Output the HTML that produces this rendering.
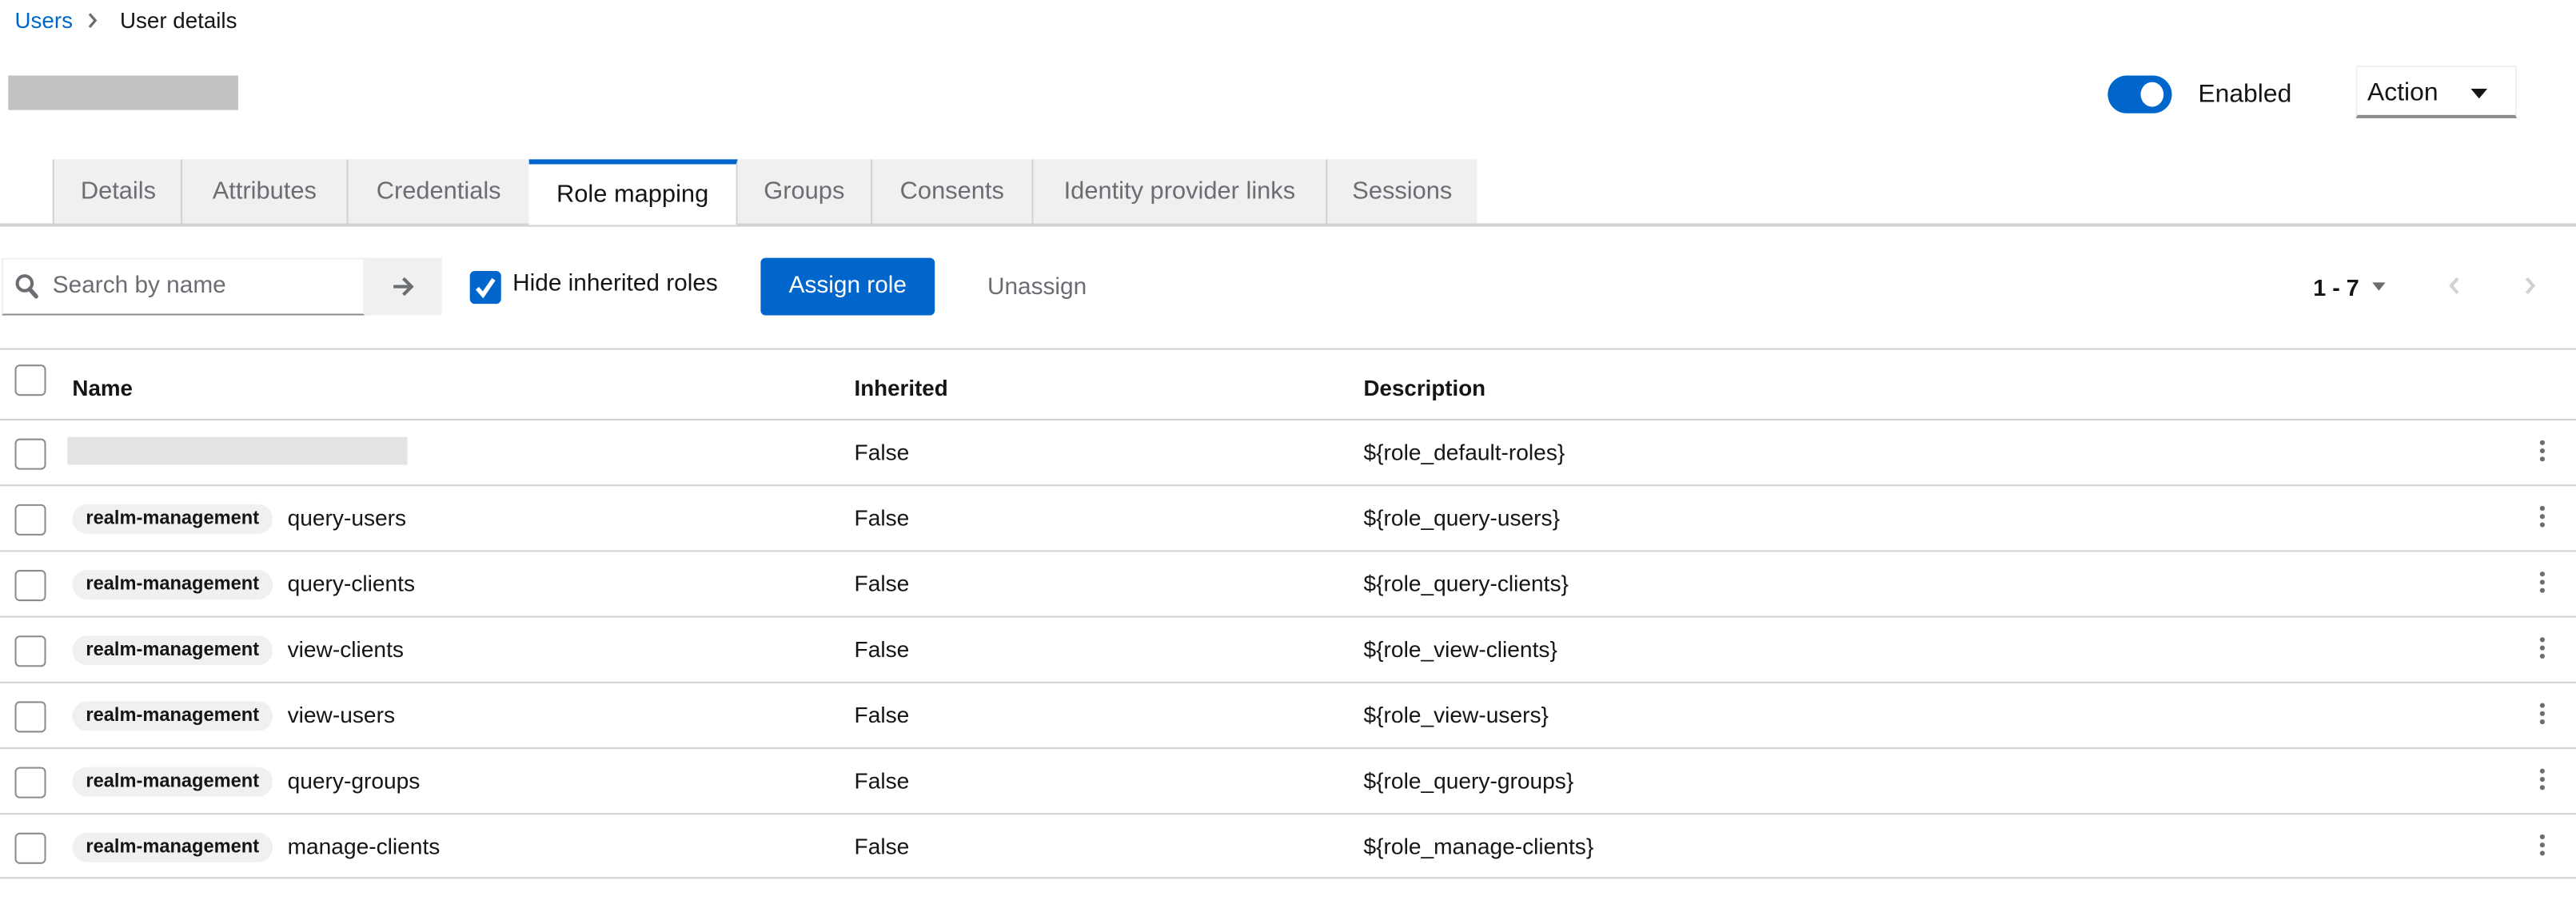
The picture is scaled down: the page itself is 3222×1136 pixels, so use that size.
<!DOCTYPE html>
<html><head><meta charset="utf-8"><style>
html,body{margin:0;padding:0;background:#fff;overflow:hidden;width:3222px;height:1136px}
#w{position:absolute;left:0;top:0;width:1568px;height:553px;transform:scale(2.05485);transform-origin:0 0;font-family:"Liberation Sans",sans-serif;color:#151515}
.a{position:absolute;white-space:nowrap}
.tab{position:absolute;top:97px;height:39px;background:#f0f0f0;border-left:1px solid #d2d2d2;box-sizing:border-box;font-size:15px;color:#6a6e73;line-height:40px;text-align:center}
.hl{position:absolute;left:0;width:1568px;height:1px;background:#d2d2d2}
.cb{position:absolute;left:9px;width:17px;height:17px;border:1.5px solid #8a8d90;border-radius:3px;background:#fff}
.chip{position:absolute;left:44px;height:18px;width:122px;border-radius:9px;background:#f0f0f0;font-size:11.5px;font-weight:bold;line-height:19px;text-align:center;color:#151515}
.t{position:absolute;font-size:13.7px;white-space:nowrap}
.keb{position:absolute;left:1546px;width:3px}
.keb i{display:block;width:3.4px;height:3.4px;border-radius:50%;background:#6a6e73;margin-bottom:1.6px}
</style></head><body><div id="w">
<div class="a" style="left:9px;top:5px;font-size:13.5px;color:#06c">Users</div>
<svg class="a" style="left:53px;top:7px" width="7" height="11" viewBox="0 0 7 11"><path d="M1.5 1.5 L5 5.5 L1.5 9.5" fill="none" stroke="#6a6e73" stroke-width="1.6"/></svg>
<div class="a" style="left:73px;top:5px;font-size:13.5px">User details</div>
<div class="a" style="left:5px;top:46px;width:140px;height:21px;background:#c1c2c2"></div>

<div class="a" style="left:1283px;top:46px;width:39px;height:23px;border-radius:12px;background:#06c"></div>
<div class="a" style="left:1303px;top:50px;width:14px;height:15px;border-radius:50%;background:#fff"></div>
<div class="a" style="left:1338px;top:49px;font-size:15.5px">Enabled</div>
<div class="a" style="left:1434px;top:40px;width:98px;height:32px;border:1px solid #f0f0f0;border-bottom:2px solid #8a8d90;box-sizing:border-box"></div>
<div class="a" style="left:1441px;top:48px;font-size:15.5px">Action</div>
<div class="a" style="left:1504px;top:54px;width:0;height:0;border-left:5px solid transparent;border-right:5px solid transparent;border-top:6px solid #151515"></div>

<div class="hl" style="top:136px;height:1.5px"></div>
<div class="tab" style="left:32px;width:79px">Details</div>
<div class="tab" style="left:110px;width:101px">Attributes</div>
<div class="tab" style="left:211px;width:111px">Credentials</div>
<div class="tab" style="left:322px;width:127px;background:#fff;border-top:3px solid #06c;height:40px;line-height:37px;color:#151515;border-left:none;border-right:1px solid #d2d2d2">Role mapping</div>
<div class="tab" style="left:449px;width:81px;border-left:none">Groups</div>
<div class="tab" style="left:530px;width:98px">Consents</div>
<div class="tab" style="left:628px;width:179px">Identity provider links</div>
<div class="tab" style="left:807px;width:92px">Sessions</div>

<div class="a" style="left:1px;top:157px;width:221px;height:35px;border:1px solid #f0f0f0;border-bottom:1.5px solid #8a8d90;box-sizing:border-box"></div>
<svg class="a" style="left:9px;top:166px" width="15" height="16" viewBox="0 0 15 16"><circle cx="6" cy="6.5" r="4.5" fill="none" stroke="#6a6e73" stroke-width="2"/><path d="M9 10 L13 14.5" stroke="#6a6e73" stroke-width="2.6" stroke-linecap="round"/></svg>
<div class="a" style="left:32px;top:166px;font-size:14.5px;color:#6a6e73">Search by name</div>
<div class="a" style="left:222px;top:157px;width:47px;height:35px;background:#f0f0f0"></div>
<svg class="a" style="left:238px;top:167px" width="15" height="15" viewBox="0 0 15 15"><path d="M1.5 7.5 H12 M7.5 2.5 L12.5 7.5 L7.5 12.5" fill="none" stroke="#6a6e73" stroke-width="2"/></svg>
<div class="a" style="left:286px;top:165px;width:19px;height:20px;border-radius:3px;background:#06c"></div>
<svg class="a" style="left:286px;top:165px" width="19" height="20" viewBox="0 0 19 20"><path d="M4.5 10.5 L8 14.5 L14.5 5" fill="none" stroke="#fff" stroke-width="2.6"/></svg>
<div class="a" style="left:312px;top:165px;font-size:14.5px">Hide inherited roles</div>
<div class="a" style="left:463px;top:157px;width:106px;height:35px;border-radius:3px;background:#06c;color:#fff;font-size:14.5px;line-height:35px;text-align:center">Assign role</div>
<div class="a" style="left:601px;top:167px;font-size:14.5px;color:#6a6e73">Unassign</div>
<div class="a" style="left:1408px;top:167px;font-size:14px;font-weight:bold">1 - 7</div>
<div class="a" style="left:1444px;top:172px;width:0;height:0;border-left:4.5px solid transparent;border-right:4.5px solid transparent;border-top:5px solid #6a6e73"></div>
<svg class="a" style="left:1490px;top:168px" width="8" height="12" viewBox="0 0 8 12"><path d="M6 1.5 L2 6 L6 10.5" fill="none" stroke="#d2d2d2" stroke-width="2"/></svg>
<svg class="a" style="left:1536px;top:168px" width="8" height="12" viewBox="0 0 8 12"><path d="M2 1.5 L6 6 L2 10.5" fill="none" stroke="#d2d2d2" stroke-width="2"/></svg>

<div class="hl" style="top:212px"></div>
<div class="cb" style="top:222px"></div>
<div class="t" style="left:44px;top:229px;font-weight:bold;font-size:13.5px">Name</div>
<div class="t" style="left:520px;top:229px;font-weight:bold;font-size:13.5px">Inherited</div>
<div class="t" style="left:830px;top:229px;font-weight:bold;font-size:13.5px">Description</div>
<div class="hl" style="top:255px"></div>

<div class="cb" style="top:267px"></div>
<div class="a" style="left:41px;top:266px;width:207px;height:17px;background:#e3e3e3"></div>
<div class="t" style="left:520px;top:268px">False</div>
<div class="t" style="left:830px;top:268px">${role_default-roles}</div>
<div class="keb" style="top:268px"><i></i><i></i><i></i></div>
<div class="hl" style="top:295px"></div>

<div class="cb" style="top:307px"></div><div class="chip" style="top:307px">realm-management</div>
<div class="t" style="left:175px;top:308px">query-users</div><div class="t" style="left:520px;top:308px">False</div>
<div class="t" style="left:830px;top:308px">${role_query-users}</div><div class="keb" style="top:308px"><i></i><i></i><i></i></div>
<div class="hl" style="top:335px"></div>

<div class="cb" style="top:347px"></div><div class="chip" style="top:347px">realm-management</div>
<div class="t" style="left:175px;top:348px">query-clients</div><div class="t" style="left:520px;top:348px">False</div>
<div class="t" style="left:830px;top:348px">${role_query-clients}</div><div class="keb" style="top:348px"><i></i><i></i><i></i></div>
<div class="hl" style="top:375px"></div>

<div class="cb" style="top:387px"></div><div class="chip" style="top:387px">realm-management</div>
<div class="t" style="left:175px;top:388px">view-clients</div><div class="t" style="left:520px;top:388px">False</div>
<div class="t" style="left:830px;top:388px">${role_view-clients}</div><div class="keb" style="top:388px"><i></i><i></i><i></i></div>
<div class="hl" style="top:415px"></div>

<div class="cb" style="top:427px"></div><div class="chip" style="top:427px">realm-management</div>
<div class="t" style="left:175px;top:428px">view-users</div><div class="t" style="left:520px;top:428px">False</div>
<div class="t" style="left:830px;top:428px">${role_view-users}</div><div class="keb" style="top:428px"><i></i><i></i><i></i></div>
<div class="hl" style="top:455px"></div>

<div class="cb" style="top:467px"></div><div class="chip" style="top:467px">realm-management</div>
<div class="t" style="left:175px;top:468px">query-groups</div><div class="t" style="left:520px;top:468px">False</div>
<div class="t" style="left:830px;top:468px">${role_query-groups}</div><div class="keb" style="top:468px"><i></i><i></i><i></i></div>
<div class="hl" style="top:495px"></div>

<div class="cb" style="top:507px"></div><div class="chip" style="top:507px">realm-management</div>
<div class="t" style="left:175px;top:508px">manage-clients</div><div class="t" style="left:520px;top:508px">False</div>
<div class="t" style="left:830px;top:508px">${role_manage-clients}</div><div class="keb" style="top:508px"><i></i><i></i><i></i></div>
<div class="hl" style="top:534px"></div>
</div></body></html>
